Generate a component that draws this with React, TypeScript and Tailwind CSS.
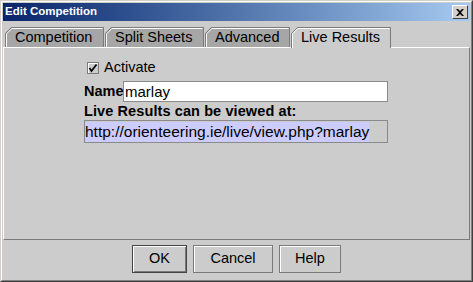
import React from "react";

const font = { fontFamily: '"Liberation Sans", Arial, sans-serif' };

function Tab({ label, width, selected }: { label: string; width: number; selected?: boolean }) {
  const w = width;
  const h = selected ? 21 : 20;
  return (
    <div
      className={`relative shrink-0 ${selected ? "h-[21px] -mb-[1px] z-10" : "h-[20px]"}`}
      style={{ width: w }}
    >
      <svg className="absolute inset-0" width={w} height={h} viewBox={`0 0 ${w} ${h}`}>
        <polygon points={`0,${h} 0,6 6,0 ${w},0 ${w},${h}`} fill={selected ? "#cccccc" : "#a6a6a6"} />
        <polyline
          points={`0.5,${h} 0.5,6.5 6.5,0.5 ${w - 0.5},0.5 ${w - 0.5},${h}`}
          fill="none"
          stroke="#7a7a7a"
          strokeWidth={1}
        />
        <polyline
          points={`1.5,${h} 1.5,6.9 6.9,1.5 ${w - 1.5},1.5`}
          fill="none"
          stroke="#ffffff"
          strokeWidth={1}
        />
      </svg>
      <div className="relative pl-[10px] h-[20px] flex items-center text-[14.5px] text-black leading-none">
        {label}
      </div>
    </div>
  );
}

function Button({ label, width, def }: { label: string; width: number; def?: boolean }) {
  return (
    <div
      className={`h-[28px] flex items-center justify-center text-[14.5px] text-black bg-[#cccccc] border ${
        def
          ? "border-[#444444] shadow-[inset_1px_1px_0_#ffffff,inset_-1px_-1px_0_#7a7a7a]"
          : "border-[#7a7a7a] shadow-[inset_1px_1px_0_#ffffff]"
      }`}
      style={{ width }}
    >
      {label}
    </div>
  );
}

export default function App() {
  return (
    <div style={font} className="w-[473px] h-[282px] bg-[#cccccc] border border-t-[#d4d0c8] border-l-[#d4d0c8] border-r-[#404040] border-b-[#404040]">
      <div className="w-full h-full border border-t-white border-l-white border-r-[#808080] border-b-[#808080] p-[1px] flex flex-col">
        {/* title bar */}
        <div className="h-[18px] shrink-0 bg-linear-to-r from-[#0a246a] to-[#a6caf0] flex items-center justify-between pl-[2px] pr-[2px]">
          <span className="text-white font-bold text-[11.5px] leading-none">Edit Competition</span>
          <div className="w-[16px] h-[14px] bg-[#d4d0c8] border border-t-white border-l-white border-r-[#404040] border-b-[#404040] flex items-center justify-center">
            <svg width="8" height="7" viewBox="0 0 8 7">
              <path d="M0 0h2l2 2 2-2h2L5 3.5 8 7H6L4 5 2 7H0l3-3.5z" fill="#000" />
            </svg>
          </div>
        </div>
        {/* tabs */}
        <div className="h-[26px] shrink-0 flex items-end pl-[2px] gap-[1px]">
          <Tab label="Competition" width={99} />
          <Tab label="Split Sheets" width={99} />
          <Tab label="Advanced" width={85} />
          <Tab label="Live Results" width={100} selected />
        </div>
        {/* panel */}
        <div className="h-[193px] shrink-0 border-t border-t-white border-l border-l-white border-r border-r-[#7a7a7a] border-b border-b-[#7a7a7a] flex flex-col pl-[80px] pt-[11px]">
          <div className="h-[17px] flex items-center ml-[3px] gap-[5px]">
            <div className="w-[12px] h-[12px] border border-[#7a7a7a] shadow-[inset_1px_1px_0_#ffffff] flex items-center justify-center">
              <svg width="10" height="10" viewBox="0 0 10 10">
                <path d="M1.5 5 L3.5 8 L8.5 1.5" fill="none" stroke="#000" strokeWidth="1.7" />
              </svg>
            </div>
            <span className="text-[14.5px] text-black leading-none">Activate</span>
          </div>
          <div className="h-[21px] mt-[5px] flex items-center">
            <span className="text-[14.5px] font-bold text-black leading-none w-[39px] shrink-0">Name</span>
            <div className="h-[21px] w-[265px] shrink-0 bg-white border border-[#8a8a8a] flex items-center pl-[1px] text-[15px] text-black leading-none">
              marlay
            </div>
          </div>
          <div className="h-[18px] flex items-center">
            <span className="text-[14.5px] font-bold text-black leading-none tracking-[0.1px]">
              Live Results can be viewed at:
            </span>
          </div>
          <div className="h-[23px] w-[304px] bg-[#cccccc] border border-[#8a8a8a] flex items-center">
            <span className="bg-[#ccccff] text-[15.5px] text-black leading-[20px] h-[20px]">
              http://orienteering.ie/live/view.php?marlay
            </span>
          </div>
        </div>
        {/* buttons */}
        <div className="flex-1 flex justify-center items-start pt-[5px] gap-[6px]">
          <Button label="OK" width={55} def />
          <Button label="Cancel" width={80} />
          <Button label="Help" width={62} />
        </div>
      </div>
    </div>
  );
}
